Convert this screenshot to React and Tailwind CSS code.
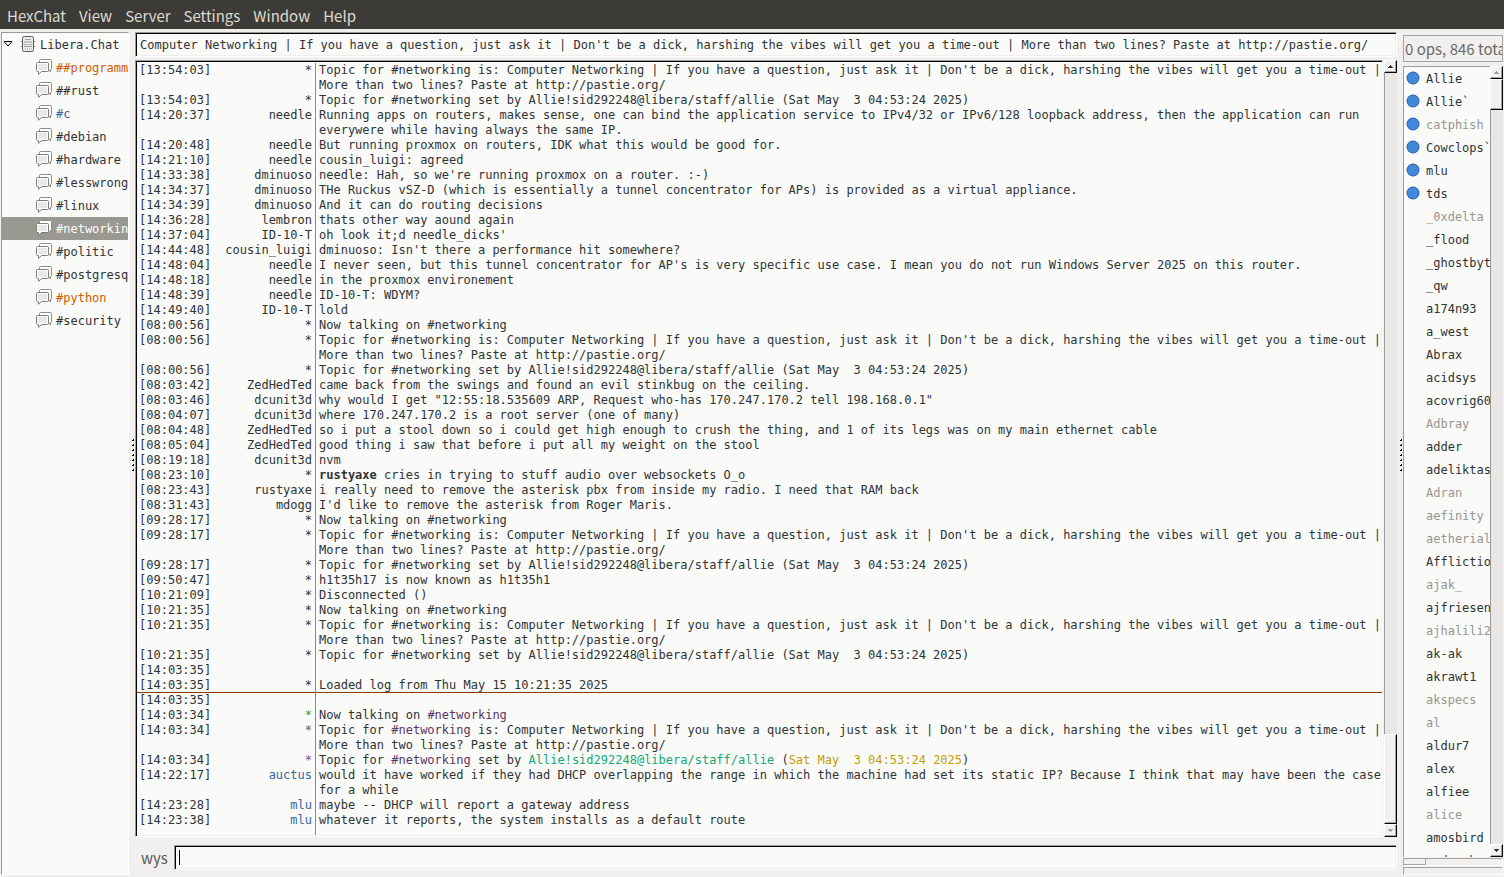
import { useState } from 'react';

const channels = [
  { name: '##programming', color: 'text-[#ce5c00]' },
  { name: '##rust' },
  { name: '#c', color: 'text-[#3465a4]' },
  { name: '#debian' },
  { name: '#hardware' },
  { name: '#lesswrong' },
  { name: '#linux' },
  { name: '#networking' },
  { name: '#politic' },
  { name: '#postgresql' },
  { name: '#python', color: 'text-[#ce5c00]' },
  { name: '#security' },
];

const users = [
  { name: 'Allie', op: true },
  { name: 'Allie`', op: true },
  { name: 'catphish', op: true, away: true },
  { name: 'Cowclops`', op: true },
  { name: 'mlu', op: true },
  { name: 'tds', op: true },
  { name: '_0xdelta', away: true },
  { name: '_flood' },
  { name: '_ghostbyt' },
  { name: '_qw' },
  { name: 'a174n93' },
  { name: 'a_west' },
  { name: 'Abrax' },
  { name: 'acidsys' },
  { name: 'acovrig60' },
  { name: 'Adbray', away: true },
  { name: 'adder' },
  { name: 'adeliktas' },
  { name: 'Adran', away: true },
  { name: 'aefinity', away: true },
  { name: 'aetherial', away: true },
  { name: 'Afflictio' },
  { name: 'ajak_', away: true },
  { name: 'ajfriesen' },
  { name: 'ajhalili2', away: true },
  { name: 'ak-ak' },
  { name: 'akrawt1' },
  { name: 'akspecs', away: true },
  { name: 'al', away: true },
  { name: 'aldur7' },
  { name: 'alex' },
  { name: 'alfiee' },
  { name: 'alice', away: true },
  { name: 'amosbird' },
  { name: 'andrewbr' },
];

const TOPIC =
  "Computer Networking | If you have a question, just ask it | Don't be a dick, harshing the vibes will get you a time-out | More than two lines? Paste at http://pastie.org/";
const TOPIC_IS = `Topic for #networking is: ${TOPIC}`;
const TOPIC_BY = 'Topic for #networking set by Allie!sid292248@libera/staff/allie (Sat May  3 04:53:24 2025)';

const Chan = () => <span className="text-[#5c3566]">#networking</span>;

const messages = [
  { time: '13:54:03', nick: '*', text: TOPIC_IS },
  { time: '13:54:03', nick: '*', text: TOPIC_BY },
  { time: '14:20:37', nick: 'needle', text: 'Running apps on routers, makes sense, one can bind the application service to IPv4/32 or IPv6/128 loopback address, then the application can run everywere while having always the same IP.' },
  { time: '14:20:48', nick: 'needle', text: 'But running proxmox on routers, IDK what this would be good for.' },
  { time: '14:21:10', nick: 'needle', text: 'cousin_luigi: agreed' },
  { time: '14:33:38', nick: 'dminuoso', text: "needle: Hah, so we're running proxmox on a router. :-)" },
  { time: '14:34:37', nick: 'dminuoso', text: 'THe Ruckus vSZ-D (which is essentially a tunnel concentrator for APs) is provided as a virtual appliance.' },
  { time: '14:34:39', nick: 'dminuoso', text: 'And it can do routing decisions' },
  { time: '14:36:28', nick: 'lembron', text: 'thats other way aound again' },
  { time: '14:37:04', nick: 'ID-10-T', text: "oh look it;d needle_dicks'" },
  { time: '14:44:48', nick: 'cousin_luigi', text: "dminuoso: Isn't there a performance hit somewhere?" },
  { time: '14:48:04', nick: 'needle', text: "I never seen, but this tunnel concentrator for AP's is very specific use case. I mean you do not run Windows Server 2025 on this router." },
  { time: '14:48:18', nick: 'needle', text: 'in the proxmox environement' },
  { time: '14:48:39', nick: 'needle', text: 'ID-10-T: WDYM?' },
  { time: '14:49:40', nick: 'ID-10-T', text: 'lold' },
  { time: '08:00:56', nick: '*', text: 'Now talking on #networking' },
  { time: '08:00:56', nick: '*', text: TOPIC_IS },
  { time: '08:00:56', nick: '*', text: TOPIC_BY },
  { time: '08:03:42', nick: 'ZedHedTed', text: 'came back from the swings and found an evil stinkbug on the ceiling.' },
  { time: '08:03:46', nick: 'dcunit3d', text: 'why would I get "12:55:18.535609 ARP, Request who-has 170.247.170.2 tell 198.168.0.1"' },
  { time: '08:04:07', nick: 'dcunit3d', text: 'where 170.247.170.2 is a root server (one of many)' },
  { time: '08:04:48', nick: 'ZedHedTed', text: 'so i put a stool down so i could get high enough to crush the thing, and 1 of its legs was on my main ethernet cable' },
  { time: '08:05:04', nick: 'ZedHedTed', text: 'good thing i saw that before i put all my weight on the stool' },
  { time: '08:19:18', nick: 'dcunit3d', text: 'nvm' },
  { time: '08:23:10', nick: '*', text: <><b>rustyaxe</b> cries in trying to stuff audio over websockets O_o</> },
  { time: '08:23:43', nick: 'rustyaxe', text: 'i really need to remove the asterisk pbx from inside my radio. I need that RAM back' },
  { time: '08:31:43', nick: 'mdogg', text: "I'd like to remove the asterisk from Roger Maris." },
  { time: '09:28:17', nick: '*', text: 'Now talking on #networking' },
  { time: '09:28:17', nick: '*', text: TOPIC_IS },
  { time: '09:28:17', nick: '*', text: TOPIC_BY },
  { time: '09:50:47', nick: '*', text: 'h1t35h17 is now known as h1t35h1' },
  { time: '10:21:09', nick: '*', text: 'Disconnected ()' },
  { time: '10:21:35', nick: '*', text: 'Now talking on #networking' },
  { time: '10:21:35', nick: '*', text: TOPIC_IS },
  { time: '10:21:35', nick: '*', text: TOPIC_BY },
  { time: '14:03:35', nick: '', text: '' },
  { time: '14:03:35', nick: '*', text: 'Loaded log from Thu May 15 10:21:35 2025', lastRead: true },
  { time: '14:03:35', nick: '', text: '' },
  { time: '14:03:34', nick: '*', nickColor: 'text-[#4e9a06]', text: <>Now talking on <Chan /></> },
  { time: '14:03:34', nick: '*', nickColor: 'text-[#75507b]', text: <>Topic for <Chan /> is: {TOPIC}</> },
  {
    time: '14:03:34',
    nick: '*',
    nickColor: 'text-[#75507b]',
    text: (
      <>
        Topic for <Chan /> set by <span className="text-[#11a879]">Allie!sid292248@libera/staff/allie</span>{' '}
        (<span className="text-[#c4a000]">{'Sat May  3 04:53:24 2025'}</span>)
      </>
    ),
  },
  { time: '14:22:17', nick: 'auctus', nickColor: 'text-[#3465a4]', text: 'would it have worked if they had DHCP overlapping the range in which the machine had set its static IP? Because I think that may have been the case for a while' },
  { time: '14:23:28', nick: 'mlu', nickColor: 'text-[#3465a4]', text: 'maybe -- DHCP will report a gateway address' },
  { time: '14:23:38', nick: 'mlu', nickColor: 'text-[#3465a4]', text: 'whatever it reports, the system installs as a default route' },
];

const ServerIcon = () => (
  <svg className="h-4 w-4 shrink-0" viewBox="0 0 16 16" fill="none">
    <path d="M0.500 5.500h2M0.500 10.500h2M13.500 5.500h2M13.500 10.500h2" stroke="#a5a6a3" />
    <rect x="2.500" y="0.500" width="11" height="15" rx="2" fill="#ececea" stroke="#555753" />
    <path d="M5 3.500h6" stroke="#a0a19e" />
    <rect x="4" y="5" width="8" height="2" fill="#c4c5c2" />
    <path d="M4 8.500h3M8 8.500h4" stroke="#b0b1ae" />
    <path d="M4 10.500h8" stroke="#a0a19e" />
    <path d="M5.500 12v2M7.500 12v2M9.500 12v2M11.500 12v2" stroke="#c4c5c2" />
  </svg>
);

const ChannelIcon = () => (
  <svg className="h-4 w-4 shrink-0" viewBox="0 0 16 16" fill="none">
    <path d="M3.500 1.500q0-1 1-1h10q1 0 1 1v8q0 1-1 1v2.500l-2-2.500h-8q-1 0-1-1z" fill="#fff" stroke="#8b8b88" />
    <path d="M0.500 4.500q0-1 1-1h10q1 0 1 1v7q0 1-1 1H5.500L2.500 15.300V12.500h-1q-1 0-1-1z" fill="#fff" stroke="#7c7c79" />
    <path d="M2 5h9v6H2z" fill="#e8e8e6" />
  </svg>
);

const OpIcon = () => (
  <svg className="h-4 w-4" viewBox="0 0 16 16">
    <circle cx="8" cy="8" r="6.500" fill="#2f66b4" />
    <circle cx="8" cy="8" r="5.500" fill="#4488dc" />
  </svg>
);

const Arrow = ({ up, disabled }) => (
  <svg className={`h-[3px] w-[5px] ${disabled ? 'text-[#a09e9a]' : 'text-[#2e3436]'}`} viewBox="0 0 5 3" shapeRendering="crispEdges">
    <path d={up ? 'M2 0h1v1h1v1h1v1H0V2h1V1h1z' : 'M0 0h5v1H4v1H3v1H2V2H1V1H0z'} fill="currentColor" />
  </svg>
);

const raised =
  'border border-t-white border-l-white border-r-black border-b-black bg-[#f2f1f0] shadow-[inset_-1px_-1px_0_#a6a4a1]';
const sunken =
  'border border-t-[#9c9a97] border-l-[#9c9a97] border-r-white border-b-white bg-[#fafaf8] shadow-[inset_1px_1px_0_#000,inset_-1px_-1px_0_#f0efed] outline-none';

// Vertical scroll bar, the three middle parts are sized by the classes passed in
const Scrollbar = ({ topOff, bottomOff, before, thumb, after }) => (
  <div className="flex w-[13px] shrink-0 flex-col bg-[#e8e7e6]">
    <button aria-label="Scroll up" className={`flex h-[13px] shrink-0 items-center justify-center ${raised}`}>
      <Arrow up disabled={topOff} />
    </button>
    <div className={`border-l border-[#9c9a97] ${before}`} />
    <div className={`shrink-0 ${raised} ${thumb}`} />
    <div className={`border-l border-[#9c9a97] ${after}`} />
    <button aria-label="Scroll down" className={`flex h-[13px] shrink-0 items-center justify-center ${raised}`}>
      <Arrow disabled={bottomOff} />
    </button>
  </div>
);

// Drag handle between two panes
const Grip = () => (
  <div className="flex w-[6px] shrink-0 flex-col items-center justify-center gap-[3px] pl-[2px] pt-[2px]">
    {[0, 1, 2, 3, 4, 5, 6].map((n) => (
      <span key={n} className="flex h-[2px] w-[2px] bg-black">
        <span className="h-px w-px bg-white" />
      </span>
    ))}
  </div>
);

const App = () => {
  const [active, setActive] = useState('#networking');
  const [topic, setTopic] = useState(TOPIC);
  const [draft, setDraft] = useState('');

  return (
    <div className="flex h-screen flex-col overflow-hidden bg-[#f1f0ef] font-['DejaVu_Sans_Mono',monospace] text-[12px] leading-[15px] text-[#2e3436]">
      <nav className="flex h-[29px] shrink-0 items-center gap-[13px] bg-[#3c3b37] px-[7px] pt-[3px] font-['Noto_Sans_CJK_SC',sans-serif] text-[15px] leading-6 text-[#dfdbd2]">
        {['HexChat', 'View', 'Server', 'Settings', 'Window', 'Help'].map((item) => (
          <button key={item}>{item}</button>
        ))}
      </nav>

      <div className="flex min-h-0 flex-1 pb-[2px] pt-[3px]">
        {/* Channel tree */}
        <aside className="ml-px w-32 shrink-0 overflow-hidden border border-b-white border-l-[#9c9a97] border-r-white border-t-[#9c9a97] bg-[#fafaf8]">
          <div className="flex h-[23px] items-start pl-px pt-[3px] leading-[19px]">
            <svg className="mt-[5px] h-[6px] w-[10px]" viewBox="0 0 10 6">
              <path d="M1 0.500h8L5 5z" fill="#fff" stroke="#000" />
            </svg>
            <span className="ml-[7px] flex items-start gap-1">
              <ServerIcon /> Libera.Chat
            </span>
          </div>
          {channels.map(({ name, color }) => (
            <button
              key={name}
              onClick={() => setActive(name)}
              className={`flex h-[23px] w-full items-start gap-1 whitespace-nowrap pl-[34px] pt-[3px] leading-[19px] ${
                active === name ? 'bg-[#9a9991] text-white' : color || ''
              }`}
            >
              <ChannelIcon /> {name}
            </button>
          ))}
        </aside>

        <Grip />

        <main className="flex min-w-0 flex-1 flex-col">
          <input
            aria-label="Topic"
            value={topic}
            onChange={(e) => setTopic(e.target.value)}
            className={`h-[25px] w-full shrink-0 px-1 ${sunken}`}
          />

          <div className="mt-[3px] flex min-h-0 flex-1">
            <ol className={`flex min-w-0 flex-1 flex-col overflow-hidden pb-px pl-px pt-[2px] ${sunken}`}>
              {messages.map((msg, i) => (
                <li
                  key={i}
                  className={`flex shrink-0 ${msg.lastRead ? 'shadow-[inset_0_-1px_0_#8f3902]' : ''}`}
                >
                  <time className="w-20 shrink-0 pl-[2px]">[{msg.time}]</time>
                  <span className={`w-[98px] shrink-0 pr-[3px] text-right ${msg.nickColor || ''}`}>{msg.nick}</span>
                  <p className="min-h-[15px] flex-1 whitespace-pre-wrap border-l border-[#8a8896] pl-[3px]">{msg.text}</p>
                </li>
              ))}
              <li aria-hidden="true" className="ml-[178px] flex-1 border-l border-[#8a8896]" />
            </ol>
            <div className="ml-px flex">
              <Scrollbar bottomOff before="flex-1" thumb="h-[90px]" after="h-0" />
            </div>
          </div>

          <div className="mb-[5px] mt-2 flex h-[25px] shrink-0 items-center">
            <label htmlFor="message" className="w-[39px] pl-[6px] font-['Noto_Sans_CJK_SC',sans-serif] text-[15px] leading-6 text-[#5a5a58]">
              wys
            </label>
            <div className="relative h-full min-w-0 flex-1">
              <input
                id="message"
                autoFocus
                value={draft}
                onChange={(e) => setDraft(e.target.value)}
                className={`h-full w-full px-1 ${draft ? '' : 'caret-transparent'} ${sunken}`}
              />
              {!draft && <span className="pointer-events-none absolute inset-y-[5px] left-[5px] w-px bg-black" />}
            </div>
          </div>
        </main>

        <Grip />

        {/* User list */}
        <aside className="flex w-[101px] shrink-0 flex-col pr-px pt-[3px]">
          <div className="h-[27px] shrink-0 overflow-hidden whitespace-nowrap border border-[#a6a4a1] pl-px font-['Noto_Sans_CJK_SC',sans-serif] text-[15px] leading-[25px] text-[#6a6a68]">
            0 ops, 846 total
          </div>
          <div className="mt-1 flex min-h-0 flex-1">
            <ul className="min-w-0 flex-1 overflow-hidden border-l border-t border-[#9c9a97] bg-[#fafaf8]">
              {users.map(({ name, op, away }) => (
                <li
                  key={name}
                  className={`flex h-[23px] items-start whitespace-nowrap pt-[3px] leading-[19px] ${away ? 'text-[#979692]' : ''}`}
                >
                  <span className="w-[22px] shrink-0 pl-px">{op && <OpIcon />}</span>
                  {name}
                </li>
              ))}
            </ul>
            <Scrollbar topOff before="h-0" thumb="h-[31px]" after="flex-1" />
          </div>
          <div className="mt-px h-2 shrink-0 border border-b-white border-l-[#a6a4a1] border-r-white border-t-[#a6a4a1]">
            <div className="h-full w-[22px] border-b border-r border-[#a6a4a1]" />
          </div>
          <div className="mt-px h-2 shrink-0 border border-b-white border-l-[#a6a4a1] border-r-white border-t-[#a6a4a1]" />
        </aside>
      </div>
    </div>
  );
};

export default App;
